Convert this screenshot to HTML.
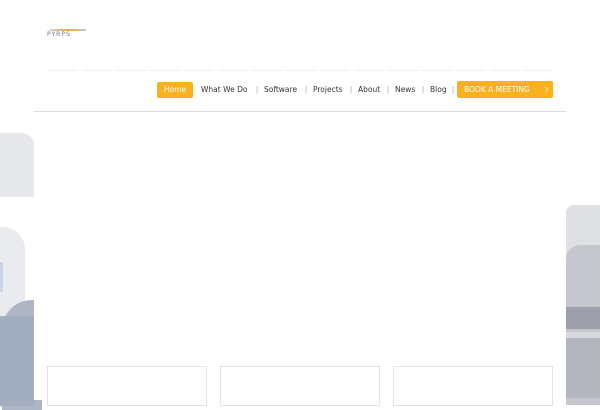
<!DOCTYPE html>
<html><head><meta charset="utf-8"><style>
*{margin:0;padding:0;box-sizing:border-box}
body{width:600px;height:400px;overflow:hidden;background:#fff;position:relative;font-family:"DejaVu Sans","Liberation Sans",sans-serif}
.a{position:absolute}
.n{position:absolute;top:84px;font-size:7.5px;line-height:12px;color:#333;white-space:nowrap;font-family:"DejaVu Sans",sans-serif}
.s{position:absolute;top:84px;font-size:8px;line-height:12px;color:#aaa;font-family:"Liberation Sans",sans-serif}
.home{position:absolute;left:157px;top:82px;width:36px;height:16px;background:#f9b21d;color:#fff;border-radius:2px;text-align:center;line-height:16px;font-size:7.5px;font-family:"DejaVu Sans",sans-serif}
.book{background:#f9b21d;color:#fff;border-radius:2px;height:17px;line-height:17px;padding:0 7px;width:96px;position:absolute;left:457px;top:81px;font-size:7.5px;font-family:"DejaVu Sans",sans-serif}
.card{position:absolute;top:366px;height:40px;border:1px solid #e2e2e2;background:#fff}
</style></head><body>
<div class="a" style="left:0;top:133px;width:34px;height:64px;background:#e7e8eb;border-radius:0 12px 0 0"></div>
<div class="a" style="left:-20px;top:227px;width:45px;height:180px;background:#e9ebee;border-radius:0 22px 0 0"></div>
<div class="a" style="left:0;top:262px;width:3px;height:30px;background:#c8d3e6"></div>
<div class="a" style="left:2px;top:300px;width:40px;height:110px;background:#aeb6c6;border-radius:30px 0 0 0"></div>
<div class="a" style="left:0;top:316px;width:34px;height:90px;background:#a3adc0"></div>
<div class="a" style="left:566px;top:205px;width:34px;height:200px;background:#dfe0e4;border-radius:8px 0 0 0"></div>
<div class="a" style="left:566px;top:245px;width:40px;height:160px;background:#c6c7cd;border-radius:14px 0 0 0"></div>
<div class="a" style="left:566px;top:307px;width:34px;height:22px;background:#9d9fab"></div>
<div class="a" style="left:566px;top:332px;width:34px;height:6px;background:#d8d9dd"></div>
<div class="a" style="left:566px;top:338px;width:34px;height:60px;background:#b4b6be"></div>
<div class="a" style="left:34px;top:0;width:532px;height:400px;background:#fff"></div>
<div class="a" style="left:50px;top:29px;width:36px;height:2px;background:linear-gradient(90deg,#cfd3e0,#f2a93a,#c6c8d8)"></div>
<div class="a" style="left:47px;top:32px;font-size:6px;letter-spacing:1px;color:#6a7590;line-height:6px">PYRPS</div>
<div class="a" style="left:48px;top:70px;width:504px;height:1px;background:repeating-linear-gradient(90deg,#eee 0 30px,#fff 30px 34px)"></div>
<div class="home">Home</div>
<div class="n" style="left:201px">What We Do</div><div class="s" style="left:256px">|</div>
<div class="n" style="left:264px">Software</div><div class="s" style="left:305px">|</div>
<div class="n" style="left:313px">Projects</div><div class="s" style="left:350px">|</div>
<div class="n" style="left:358px">About</div><div class="s" style="left:387px">|</div>
<div class="n" style="left:395px">News</div><div class="s" style="left:422px">|</div>
<div class="n" style="left:430px">Blog</div><div class="s" style="left:452px">|</div>
<div class="book">BOOK A MEETING<span style="position:absolute;right:4px;top:0;font-size:12px;line-height:16px;color:#fde3a4">›</span></div>
<div class="a" style="left:34px;top:111px;width:532px;height:1px;background:#dcdcdc"></div>
<div class="card" style="left:47px;width:160px"></div>
<div class="card" style="left:220px;width:160px"></div>
<div class="card" style="left:393px;width:160px"></div>
</body></html>
